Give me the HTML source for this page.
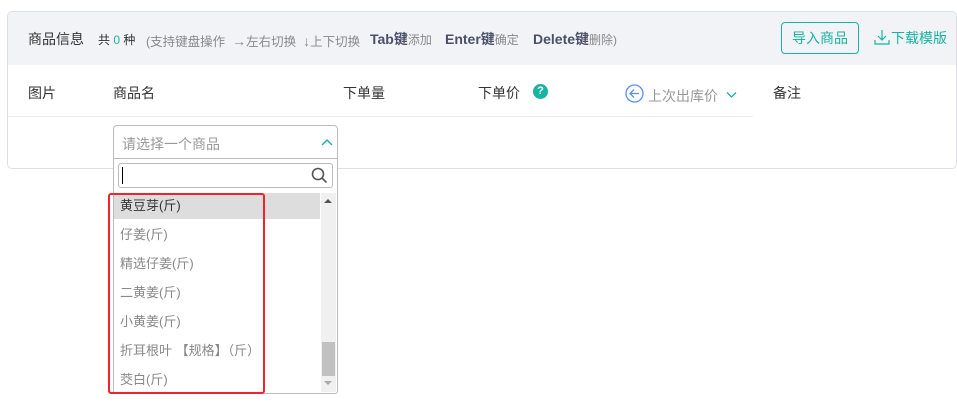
<!DOCTYPE html>
<html><head><meta charset="utf-8"><style>
*{margin:0;padding:0;box-sizing:border-box}
body{width:957px;height:402px;background:#fff;font-family:"Liberation Sans","Noto Sans CJK SC",sans-serif;position:relative;overflow:hidden;color:#333}
.a{position:absolute;white-space:nowrap}
</style></head><body>
<div class="a" style="left:7px;top:11px;width:950px;height:158px;border:1px solid #dcdfe6;border-radius:5px;overflow:hidden">
 <div class="a" style="left:0;top:0;width:950px;height:53px;background:#f2f3f7"></div>
 <div class="a" style="left:0;top:104px;width:745px;height:1px;background:#ebeef5"></div>
</div>
<div class="a" style="left:28px;top:29px;font-size:14px;color:#333">商品信息</div>
<div class="a" style="left:98px;top:31px;font-size:12px;color:#333">共 <span style="color:#17b3a3">0</span> 种</div>
<div class="a" style="left:146px;top:31px;font-size:12.5px;color:#888">(支持键盘操作&nbsp; <span style="font-size:14px">→</span>左右切换&nbsp; <span style="font-size:14px">↓</span>上下切换</div>
<div class="a" style="left:370px;top:29px;font-size:14px;color:#4a5068;font-weight:bold">Tab键<span style="font-size:12px;font-weight:normal;color:#888">添加</span></div>
<div class="a" style="left:445px;top:29px;font-size:14px;color:#4a5068;font-weight:bold">Enter键<span style="font-size:12px;font-weight:normal;color:#888">确定</span></div>
<div class="a" style="left:533px;top:29px;font-size:14px;color:#4a5068;font-weight:bold">Delete键<span style="font-size:12px;font-weight:normal;color:#888">删除)</span></div>
<div class="a" style="left:781px;top:22px;width:78px;height:32px;border:1px solid #17b3a3;border-radius:4px;color:#17b3a3;font-size:14px;text-align:center;line-height:30px">导入商品</div>
<svg class="a" style="left:874px;top:29px" width="16" height="16" viewBox="0 0 16 16" fill="none" stroke="#17b3a3" stroke-width="1.2"><path d="M8 1v10M4 7l4 4 4-4M1 11v4h14v-4"/></svg>
<div class="a" style="left:891px;top:28px;font-size:14px;color:#17b3a3">下载模版</div>
<div class="a" style="left:28px;top:83px;font-size:14px">图片</div>
<div class="a" style="left:113px;top:83px;font-size:14px">商品名</div>
<div class="a" style="left:343px;top:83px;font-size:14px">下单量</div>
<div class="a" style="left:478px;top:83px;font-size:14px">下单价</div>
<div class="a" style="left:533px;top:84px;width:15px;height:15px;border-radius:50%;background:#17b3a3;color:#fff;font-size:11px;font-weight:bold;text-align:center;line-height:15px">?</div>
<svg class="a" style="left:625px;top:84px" width="19" height="19" viewBox="0 0 19 19" fill="none" stroke="#5b8ff9" stroke-width="1.3"><circle cx="9.5" cy="9.5" r="8.5"/><path d="M14 9.5H5M9 5.5l-4 4 4 4"/></svg>
<div class="a" style="left:648px;top:86px;font-size:14px;color:#999">上次出库价</div>
<svg class="a" style="left:726px;top:91px" width="11" height="8" viewBox="0 0 11 8" fill="none" stroke="#17b3a3" stroke-width="1.3"><path d="M1 1.5l4.5 4.5 4.5-4.5"/></svg>
<div class="a" style="left:773px;top:83px;font-size:14px">备注</div>
<div class="a" style="left:113px;top:125px;width:225px;height:34px;border:1px solid #bbb;border-radius:4px 4px 0 0;background:#fff"></div>
<div class="a" style="left:122px;top:134px;font-size:14px;color:#999">请选择一个商品</div>
<svg class="a" style="left:321px;top:138px" width="12" height="8" viewBox="0 0 12 8" fill="none" stroke="#17b3a3" stroke-width="1.4"><path d="M1 7l5-5 5 5"/></svg>
<div class="a" style="left:113px;top:158px;width:225px;height:236px;border:1px solid #bbb;background:#fff;border-radius:0 0 3px 3px"></div>
<div class="a" style="left:118px;top:163px;width:215px;height:25px;border:1px solid #bbb;border-radius:3px"></div>
<div class="a" style="left:122px;top:167px;width:1px;height:17px;background:#000"></div>
<svg class="a" style="left:311px;top:167px" width="17" height="17" viewBox="0 0 17 17" fill="none" stroke="#555" stroke-width="1.6"><circle cx="7" cy="7" r="5.5"/><path d="M11 11l4.5 4.5"/></svg>
<div class="a" style="left:114px;top:193px;width:206px;height:26px;background:#ddd"></div>
<div class="a" style="left:321px;top:193px;width:15px;height:199px;background:#f0f0f0"></div>
<div class="a" style="left:322px;top:342px;width:13px;height:34px;background:#c1c1c1"></div>
<div class="a" style="left:324px;top:199px;width:0;height:0;border:4px solid transparent;border-bottom:4px solid #555;border-top:0"></div>
<div class="a" style="left:324px;top:381px;width:0;height:0;border:4px solid transparent;border-top:4px solid #aaa;border-bottom:0"></div>
<div class="a" style="left:120px;top:198px;font-size:13px;color:#333;line-height:16px">黄豆芽(斤)</div>
<div class="a" style="left:120px;top:227px;font-size:13px;color:#888;line-height:16px">仔姜(斤)</div>
<div class="a" style="left:120px;top:256px;font-size:13px;color:#888;line-height:16px">精选仔姜(斤)</div>
<div class="a" style="left:120px;top:285px;font-size:13px;color:#888;line-height:16px">二黄姜(斤)</div>
<div class="a" style="left:120px;top:314px;font-size:13px;color:#888;line-height:16px">小黄姜(斤)</div>
<div class="a" style="left:120px;top:343px;font-size:13px;color:#888;line-height:16px">折耳根叶 【规格】（斤）</div>
<div class="a" style="left:120px;top:372px;font-size:13px;color:#888;line-height:16px">茭白(斤)</div>
<div class="a" style="left:108px;top:193px;width:157px;height:201px;border:2px solid #f5222d;border-radius:3px"></div>
</body></html>
